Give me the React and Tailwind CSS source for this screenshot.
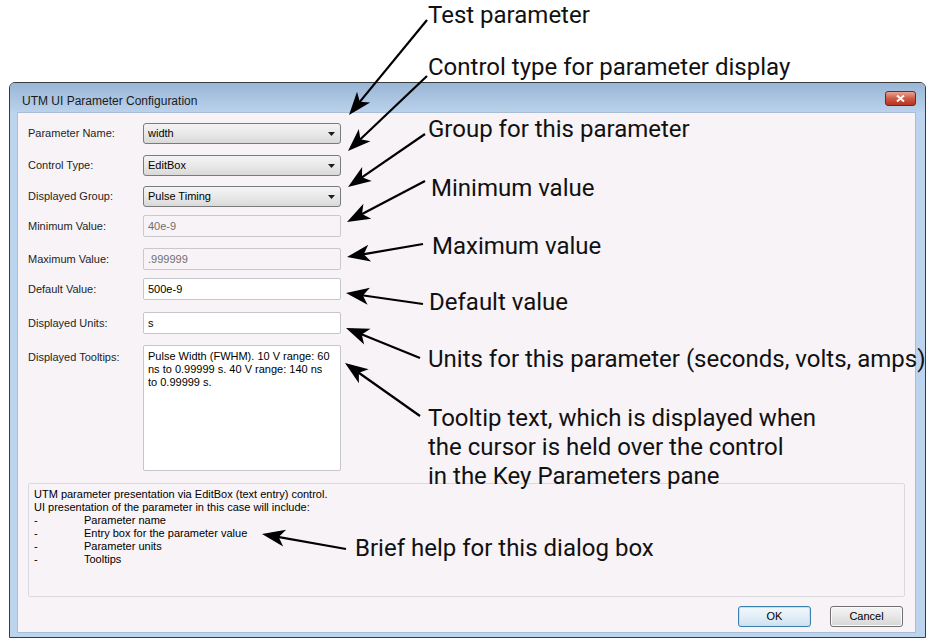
import React from "react";

const ui = { fontFamily: '"Liberation Sans", Arial, sans-serif' };
const note = { fontFamily: 'Roboto, "Liberation Sans", sans-serif' };

function Combo({ value }) {
  return (
    <div className="flex items-center h-[21px] w-[198px] border border-[#7b7b7b] rounded-[3px] bg-linear-to-b from-[#f4f4f4] via-[#e9e9e9] to-[#d9d9d9] pl-[4px] pr-[5px] text-[11px] text-black">
      <span className="flex-1 truncate">{value}</span>
      <svg width="7" height="4" viewBox="0 0 7 4">
        <path d="M0 0h7L3.5 4z" fill="#1c1c1c" />
      </svg>
    </div>
  );
}

function Edit({ value, disabled }) {
  return (
    <div
      className={
        disabled
          ? "flex items-center h-[22px] w-[198px] border border-[#c9c9cc] rounded-[2px] bg-[#f7f3f7] pl-[4px] text-[11px] text-[#6f6f6f]"
          : "flex items-center h-[22px] w-[198px] border border-[#c4c6cb] rounded-[2px] bg-white pl-[4px] text-[11px] text-black"
      }
    >
      {value}
    </div>
  );
}

function Row({ label, top, children, center = true }) {
  return (
    <div className={center ? "flex items-center" : "flex items-start"} style={{ marginTop: top }}>
      <div className={center ? "w-[115px] text-[11px] text-[#1e1e1e]" : "w-[115px] text-[11px] text-[#1e1e1e] pt-[4px]"}>{label}</div>
      {children}
    </div>
  );
}

function Arrow({ x1, y1, x2, y2 }) {
  const a = Math.atan2(y2 - y1, x2 - x1);
  const c = Math.cos(a);
  const s = Math.sin(a);
  const pt = (px, py) => `${x2 + px * c - py * s},${y2 + px * s + py * c}`;
  const ex = x2 - 16 * c;
  const ey = y2 - 16 * s;
  return (
    <g>
      <line x1={x1} y1={y1} x2={ex} y2={ey} stroke="#000" strokeWidth="2.2" />
      <polygon points={[pt(0, 0), pt(-23, -8.5), pt(-17, 0), pt(-23, 8.5)].join(" ")} fill="#000" />
    </g>
  );
}

const arrows = [
  [427, 20, 349, 115],
  [427, 76, 348, 151],
  [425, 134, 348, 187],
  [425, 181, 347, 222],
  [423, 244, 347, 257],
  [423, 304, 346, 293],
  [420, 358, 346, 328],
  [420, 416, 345, 363],
  [346, 549, 262, 534],
];

const notes = [
  { t: "Test parameter", x: 428, y: 1 },
  { t: "Control type for parameter display", x: 428, y: 53 },
  { t: "Group for this parameter", x: 428, y: 115 },
  { t: "Minimum value", x: 431, y: 174 },
  { t: "Maximum value", x: 432, y: 232 },
  { t: "Default value", x: 429, y: 288 },
  { t: "Units for this parameter (seconds, volts, amps)", x: 428, y: 345 },
  { t: "Tooltip text, which is displayed when", x: 428, y: 404 },
  { t: "the cursor is held over the control", x: 428, y: 433 },
  { t: "in the Key Parameters pane", x: 428, y: 462 },
  { t: "Brief help for this dialog box", x: 355, y: 534 },
];

export default function App() {
  return (
    <div className="relative w-[933px] h-[639px] bg-white overflow-hidden" style={ui}>
      {/* dialog window */}
      <div className="ml-[9px] mt-[82px] w-[917px] h-[556px] border border-[#3b3b3b] rounded-t-[6px] bg-[#bcd4ed] flex flex-col overflow-hidden">
        <div className="h-[29px] shrink-0 flex items-center justify-between pl-[12px] pr-[9px] bg-linear-to-b from-[#9ab6d6] to-[#bad2eb]">
          <span className="text-[12px] text-[#1b1b1b] pt-[6px]">UTM UI Parameter Configuration</span>
          <div className="mt-[2px] w-[31px] h-[15px] rounded-[3px] border border-[#6b2a22] bg-linear-to-b from-[#e8a393] via-[#cc5a45] to-[#b8301e] flex items-center justify-center">
            <svg width="9" height="7" viewBox="0 0 9 7">
              <path d="M1 0.5L8 6.5M8 0.5L1 6.5" stroke="#fff" strokeWidth="2" />
            </svg>
          </div>
        </div>
        <div className="ml-[7px] w-[899px] h-[521px] bg-[#f7f3f7] border border-[#a9bed6] pl-[10px] flex flex-col">
          <Row label="Parameter Name:" top={10}>
            <Combo value="width" />
          </Row>
          <Row label="Control Type:" top={11}>
            <Combo value="EditBox" />
          </Row>
          <Row label="Displayed Group:" top={10}>
            <Combo value="Pulse Timing" />
          </Row>
          <Row label="Minimum Value:" top={8}>
            <Edit value="40e-9" disabled />
          </Row>
          <Row label="Maximum Value:" top={11}>
            <Edit value=".999999" disabled />
          </Row>
          <Row label="Default Value:" top={8}>
            <Edit value="500e-9" />
          </Row>
          <Row label="Displayed Units:" top={12}>
            <Edit value="s" />
          </Row>
          <Row label="Displayed Tooltips:" top={11} center={false}>
            <div className="h-[126px] w-[198px] border border-[#c4c6cb] rounded-[2px] bg-white pl-[4px] pt-[4px] text-[11px] leading-[13px] text-black">
              Pulse Width (FWHM). 10 V range: 60
              <br />
              ns to 0.99999 s. 40 V range: 140 ns
              <br />
              to 0.99999 s.
            </div>
          </Row>
          <div className="mt-[12px] w-[877px] h-[114px] border border-[#d9d9e0] rounded-[2px] pl-[5px] pt-[4px] text-[11px] leading-[13px] text-black">
            <div>UTM parameter presentation via EditBox (text entry) control.</div>
            <div>UI presentation of the parameter in this case will include:</div>
            {["Parameter name", "Entry box for the parameter value", "Parameter units", "Tooltips"].map((t) => (
              <div key={t} className="flex">
                <span className="w-[50px]">-</span>
                <span>{t}</span>
              </div>
            ))}
          </div>
          <div className="mt-[9px] flex justify-end gap-[19px] pr-[12px]">
            <button className="w-[73px] h-[21px] rounded-[3px] border border-[#3c7fb1] bg-linear-to-b from-[#f2f8fc] via-[#e3eef7] to-[#cfe2f1] text-[11px] text-black shadow-[inset_0_0_0_1px_#bfe2f8]">
              OK
            </button>
            <button className="w-[73px] h-[21px] rounded-[3px] border border-[#707070] bg-linear-to-b from-[#f4f4f4] via-[#e7e7e7] to-[#d6d6d6] text-[11px] text-black shadow-[inset_0_0_0_1px_#fbfbfb]">
              Cancel
            </button>
          </div>
        </div>
      </div>

      {/* annotations */}
      <svg className="absolute left-0 top-0 pointer-events-none" width="933" height="639">
        {arrows.map(([x1, y1, x2, y2], i) => (
          <Arrow key={i} x1={x1} y1={y1} x2={x2} y2={y2} />
        ))}
      </svg>
      {notes.map((n) => (
        <div
          key={n.t}
          className="absolute whitespace-nowrap text-[24px] leading-[29px] text-[#111]"
          style={{ ...note, left: n.x, top: n.y }}
        >
          {n.t}
        </div>
      ))}
    </div>
  );
}
